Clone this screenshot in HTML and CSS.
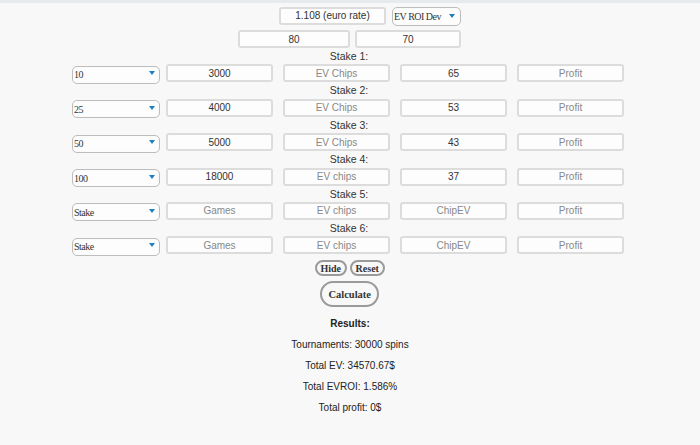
FILE: index.html
```html
<!DOCTYPE html>
<html>
<head>
<meta charset="utf-8">
<link rel="stylesheet" href="styles.css">
</head>
<body>
<div class="topbar"></div>
<main class="page">
  <div class="row top-row first">
    <input class="field euro" type="text" value="1.108 (euro rate)">
    <span class="sel-wrap sel-mode"><select class="sel"><option>EV ROI Dev</option></select></span>
  </div>
  <div class="row top-row second">
    <input class="field wide-a" type="text" value="80">
    <input class="field wide-b" type="text" value="70">
  </div>

  <div class="label">Stake 1:</div>
  <div class="row stake-row">
    <span class="sel-wrap"><select class="sel"><option>10</option></select></span>
    <input class="field" type="text" value="3000">
    <input class="field" type="text" placeholder="EV Chips">
    <input class="field" type="text" value="65">
    <input class="field" type="text" placeholder="Profit">
  </div>

  <div class="label">Stake 2:</div>
  <div class="row stake-row">
    <span class="sel-wrap"><select class="sel"><option>25</option></select></span>
    <input class="field" type="text" value="4000">
    <input class="field" type="text" placeholder="EV Chips">
    <input class="field" type="text" value="53">
    <input class="field" type="text" placeholder="Profit">
  </div>

  <div class="label">Stake 3:</div>
  <div class="row stake-row">
    <span class="sel-wrap"><select class="sel"><option>50</option></select></span>
    <input class="field" type="text" value="5000">
    <input class="field" type="text" placeholder="EV Chips">
    <input class="field" type="text" value="43">
    <input class="field" type="text" placeholder="Profit">
  </div>

  <div class="label">Stake 4:</div>
  <div class="row stake-row">
    <span class="sel-wrap"><select class="sel"><option>100</option></select></span>
    <input class="field" type="text" value="18000">
    <input class="field" type="text" placeholder="EV chips">
    <input class="field" type="text" value="37">
    <input class="field" type="text" placeholder="Profit">
  </div>

  <div class="label">Stake 5:</div>
  <div class="row stake-row">
    <span class="sel-wrap"><select class="sel"><option>Stake</option></select></span>
    <input class="field" type="text" placeholder="Games">
    <input class="field" type="text" placeholder="EV chips">
    <input class="field" type="text" placeholder="ChipEV">
    <input class="field" type="text" placeholder="Profit">
  </div>

  <div class="label">Stake 6:</div>
  <div class="row stake-row">
    <span class="sel-wrap"><select class="sel"><option>Stake</option></select></span>
    <input class="field" type="text" placeholder="Games">
    <input class="field" type="text" placeholder="EV chips">
    <input class="field" type="text" placeholder="ChipEV">
    <input class="field" type="text" placeholder="Profit">
  </div>

  <div class="row btn-row">
    <button class="btn small hide">Hide</button>
    <button class="btn small reset">Reset</button>
  </div>
  <div class="row btn-row calc-row">
    <button class="btn calc">Calculate</button>
  </div>

  <section class="results">
    <p class="res-title">Results:</p>
    <p>Tournaments: 30000 spins</p>
    <p>Total EV: 34570.67$</p>
    <p>Total EVROI: 1.586%</p>
    <p>Total profit: 0$</p>
  </section>
</main>
</body>
</html>
```

FILE: styles.css
```css
html, body {
  margin: 0;
  padding: 0;
  background: #f8f8f8;
}
body {
  font-family: "Liberation Sans", Arial, sans-serif;
  color: #333;
  width: 700px;
  height: 445px;
  overflow: hidden;
}
.topbar {
  height: 3px;
  background: #e4eaee;
}
.page {
  display: flex;
  flex-direction: column;
  align-items: center;
}
.row {
  display: flex;
  justify-content: center;
  align-items: center;
}
.top-row.first {
  margin-top: 3px;
  gap: 6px;
  height: 19px;
  margin-left: 40px;
}
.top-row.second {
  margin-top: 5px;
  gap: 5px;
  height: 18px;
  margin-left: -1px;
}
.field {
  box-sizing: border-box;
  width: 107px;
  height: 18px;
  border: 2px solid #dcdcdc;
  border-radius: 3px;
  background: #fdfdfd;
  font-family: "Liberation Sans", Arial, sans-serif;
  font-size: 10px;
  color: #333;
  text-align: center;
  padding: 0 2px;
  margin: 0;
  outline: none;
}
.field::placeholder {
  color: #888;
  opacity: 1;
}
.field.euro {
  width: 107px;
}
.field.wide-a {
  width: 112px;
}
.field.wide-b {
  width: 106px;
}
.sel-wrap {
  position: relative;
  display: inline-block;
  flex: none;
  width: 88px;
  height: 18px;
}
.sel-wrap::after {
  content: "";
  position: absolute;
  right: 5px;
  top: 7px;
  border-left: 3.5px solid transparent;
  border-right: 3.5px solid transparent;
  border-top: 4px solid #1d7fc0;
}
.sel-mode {
  width: 69px;
  height: 19px;
}
.sel-mode::after {
  right: 6px;
  top: 7.5px;
}
.sel {
  -webkit-appearance: none;
  appearance: none;
  box-sizing: border-box;
  width: 100%;
  height: 100%;
  border: 1px solid #bdbdbd;
  border-radius: 5px;
  background: #fdfdfd;
  box-shadow: inset 0 0 1px rgba(0,0,0,0.08);
  font-family: "Liberation Serif", "Times New Roman", serif;
  font-size: 10px;
  letter-spacing: -0.5px;
  color: #333;
  padding: 0 0 0 1px;
  margin: 0;
  outline: none;
}
.label {
  height: 16.4px;
  line-height: 17px;
  font-size: 10.5px;
  color: #333;
  text-align: center;
  margin-left: -2px;
}
.stake-row {
  gap: 10px;
  height: 18px;
  margin-left: -4px;
}
.stake-row .sel-wrap {
  margin-right: -4px;
}
.btn-row {
  gap: 3px;
  margin-top: 6px;
  margin-left: -0.5px;
}
.btn {
  box-sizing: border-box;
  border: 2px solid #9a9a9a;
  background: #f8f8f8;
  font-family: "Liberation Serif", "Times New Roman", serif;
  font-weight: bold;
  font-size: 10px;
  color: #333;
  padding: 0;
  margin: 0;
  cursor: pointer;
}
.btn.small {
  height: 16px;
  border-radius: 8px;
}
.btn.hide {
  width: 32px;
}
.btn.reset {
  width: 35px;
}
.calc-row {
  margin-top: 5px;
}
.btn.calc {
  width: 59px;
  height: 26px;
  border-radius: 13px;
  font-size: 10.5px;
}
.results {
  margin-top: 9px;
  text-align: center;
  font-size: 10px;
  color: #222;
}
.results p {
  margin: 0;
  height: 21px;
  line-height: 16px;
}
.results .res-title {
  font-weight: bold;
  height: 21px;
}
```
